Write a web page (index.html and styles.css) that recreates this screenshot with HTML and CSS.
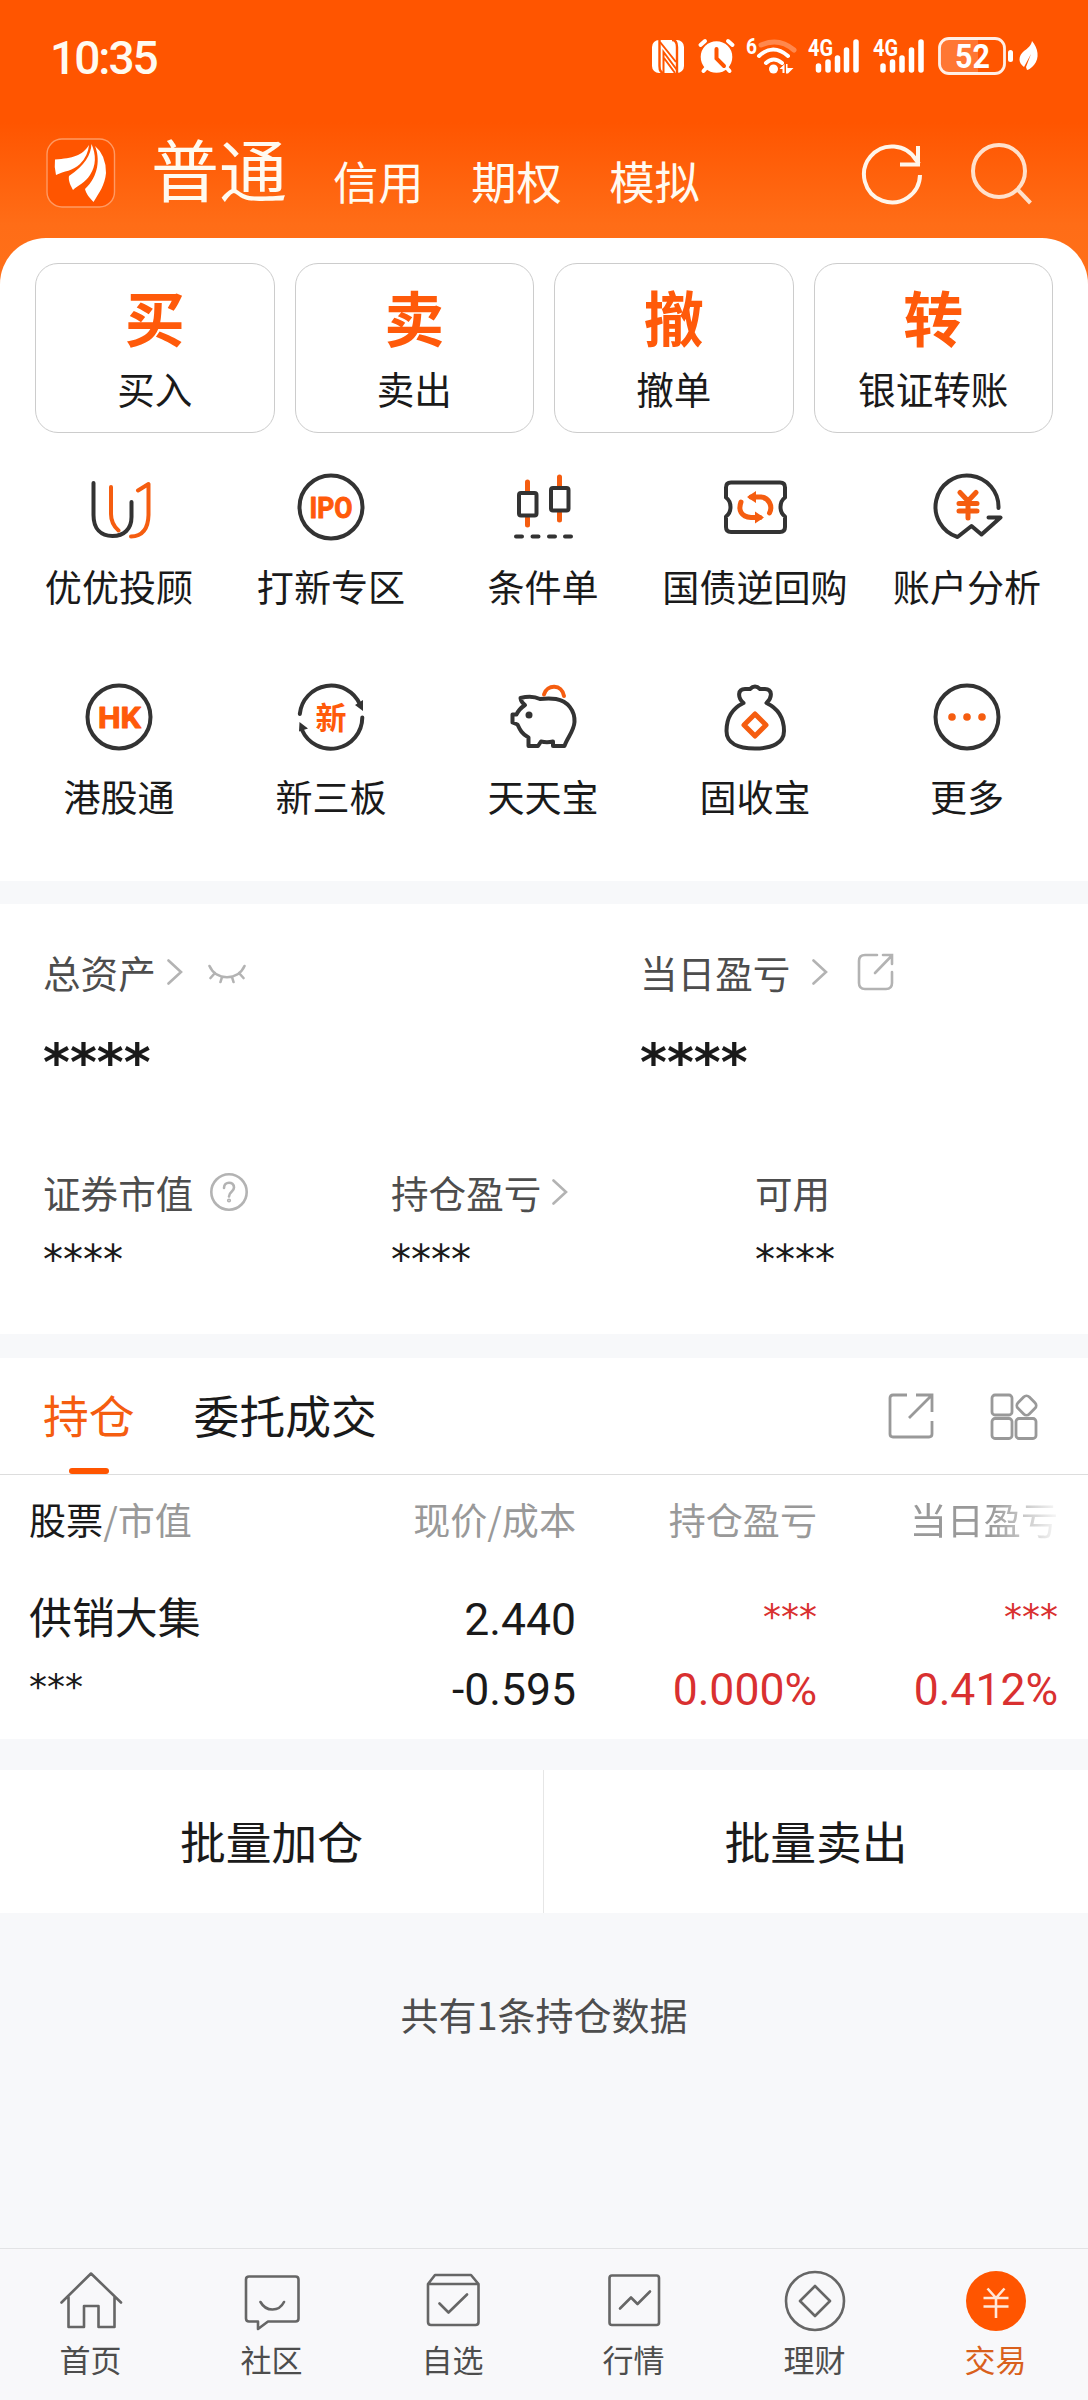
FILE: index.html
```
<!DOCTYPE html>
<html lang="zh-CN">
<head>
    <meta charset="UTF-8">
    <meta name="viewport" content="width=device-width, initial-scale=1.0">
    <title>交易</title>
    <link rel="stylesheet" href="styles.css">
</head>
<body>
    <header class="header">
        <div class="status">
            <span class="time">10:35</span>
            <svg class="status-icons" width="390" height="44" viewBox="650 34 390 44" fill="#fff">
                <!-- NFC -->
                <rect x="652" y="40" width="32" height="33" rx="7"/>
                <g fill="none" stroke="#ff5500" stroke-width="2.4">
                    <path d="M659.5 40V66Q659.5 73 664 73M677 73V47Q677 40 672 40"/>
                    <path d="M660 42L676 62M663.500 73V52L677 70M664 58L675 73" stroke-width="2"/>
                </g>
                <!-- alarm -->
                <circle cx="716.500" cy="57" r="15.800"/>
                <g fill="none" stroke="#fff" stroke-width="4" stroke-linecap="round">
                    <path d="M700.500 45L705 41M732.500 45L728 41M707 67L703.500 71M726 67L729.500 71"/>
                </g>
                <path d="M716.500 49V58.500L724 66" fill="none" stroke="#ff5500" stroke-width="4" stroke-linecap="round"/>
                <!-- wifi -->
                <text class="net" x="746" y="54" font-size="22" textLength="11" lengthAdjust="spacingAndGlyphs">6</text>
                <g fill="none" stroke="#fff" stroke-width="4" stroke-linecap="round">
                    <path d="M761 45Q779 37 794 50" opacity=".3" stroke-width="5"/>
                    <path d="M759 56Q773 43 788 56M766 63Q773.500 56 782 63"/>
                </g>
                <circle cx="773.500" cy="69" r="4.500"/>
                <path d="M779.500 69L784.500 64V73H782.500V69ZM786 64H787.500V68H793.500L788 73.500H786Z"/>
                <!-- signal -->
                <text class="net" x="808" y="55.500" font-size="23" textLength="25" lengthAdjust="spacingAndGlyphs">4G</text>
                <g stroke="#fff" stroke-width="5.500" stroke-linecap="round">
                    <path d="M818.500 66V70M828 62V70M837.500 58V70M846.500 50V70M856 42V70"/>
                    <path d="M883 66V70M892.500 62V70M902 58V70M911.500 50V70M921 42V70"/>
                </g>
                <text class="net" x="873" y="55.500" font-size="23" textLength="25" lengthAdjust="spacingAndGlyphs">4G</text>
                <!-- battery -->
                <path d="M948 39H978V73H948Q940 73 940 65V47Q940 39 948 39Z" opacity=".2"/>
                <rect x="939.500" y="38.500" width="65" height="35" rx="9.500" fill="none" stroke="#fff" stroke-width="2.800" opacity=".9"/>
                <rect x="1008" y="50" width="5" height="12" rx="2.500"/>
                <text class="net" x="955" y="68" font-size="33" textLength="35" lengthAdjust="spacingAndGlyphs">52</text>
                <!-- leaf -->
                <path d="M1032 41C1038 48 1040 58 1034 65C1032 67 1029 70 1027 70L1026 67L1031 54L1024 67C1018 63 1018 56 1024 51C1028 48 1031 46 1032 41Z"/>
            </svg>
        </div>
        <div class="topbar">
            <svg class="logo" width="70" height="70" viewBox="0 0 70 70">
                <rect x="1" y="1" width="67.500" height="68" rx="15" fill="#ff5500" stroke="#ff9a63" stroke-width="1.400"/>
                <g fill="#fff">
                    <path d="M43 7C36 18 27 20 9 21.500Q8 29 10 37C18 33 27 33 34 26Q42 18 43 7Z"/>
                    <path d="M45.500 6C45 17 39 27 23 38C22 43 25 48 27 52C32 47 39 45 44 37Q53 23 45.500 6Z"/>
                    <path d="M49 8C54 20 53 38 39 51C40 56 44 60 47.500 64C53 55 59 47 60 35Q60 17 49 8Z"/>
                </g>
            </svg>
            <nav class="accounts">
                <a class="current">普通</a>
                <a>信用</a>
                <a>期权</a>
                <a>模拟</a>
            </nav>
            <svg class="refresh" width="64" height="64" viewBox="0 0 64 64" fill="none" stroke="#fff5ea" stroke-width="4">
                <path d="M60 33A28 28 0 1 1 56 18L59 22"/>
                <path d="M58 4V22.500H40"/>
            </svg>
            <svg class="search" width="64" height="64" viewBox="0 0 64 64" fill="none" stroke="#ffe0cb" stroke-width="4">
                <circle cx="29" cy="29" r="26"/>
                <path d="M47 47L60.500 61"/>
            </svg>
        </div>
    </header>

    <main>
        <section class="panel trade">
            <div class="actions">
                <div class="action"><b>买</b><span>买入</span></div>
                <div class="action"><b>卖</b><span>卖出</span></div>
                <div class="action"><b>撤</b><span>撤单</span></div>
                <div class="action"><b>转</b><span>银证转账</span></div>
            </div>
            <div class="tools">
                <div class="tool">
                    <svg viewBox="0 0 72 72">
                        <path d="M10.500 12V44C10.500 58 18 65 29.500 65S48.500 58 48.500 46V31"/>
                        <path class="o" d="M28 16V43Q28 53 35.500 59.500M55 19.500L65.500 13V44Q65 65 48 65.500"/>
                    </svg>
                    <span>优优投顾</span>
                </div>
                <div class="tool">
                    <svg viewBox="0 0 72 72">
                        <circle cx="36" cy="36" r="31.500"/>
                        <text x="14.500" y="47" font-size="30" textLength="43" lengthAdjust="spacingAndGlyphs">IPO</text>
                    </svg>
                    <span>打新专区</span>
                </div>
                <div class="tool">
                    <svg viewBox="0 0 72 72">
                        <path class="o wick" d="M20.500 11V20M20.500 47V54M52.500 6V15M52.500 42V49"/>
                        <rect x="12" y="22" width="17.500" height="22.500" rx="2"/>
                        <rect x="44" y="17" width="17.500" height="22.500" rx="2"/>
                        <path d="M9 65.500H15M25.500 65.500H31.500M42 65.500H48M58 65.500H64"/>
                    </svg>
                    <span>条件单</span>
                </div>
                <div class="tool">
                    <svg viewBox="0 0 72 72">
                        <path d="M12 11.500H61Q66 11.500 66 16.500V26.500C60 31 60 41 66 45.500V56Q66 61 61 61H12Q7 61 7 56V45.500C13 41 13 31 7 26.500V16.500Q7 11.500 12 11.500Z"/>
                        <path class="o arrows" d="M32 26H42C50 27 54 35 50.500 42M41 46.500H32C22 46 19 39 22 31"/>
                        <path class="of" d="M28 26L37 20V32ZM45 46.500L36 40.500V52.500Z"/>
                    </svg>
                    <span>国债逆回购</span>
                </div>
                <div class="tool">
                    <svg viewBox="0 0 72 72">
                        <path d="M67.500 37A31.500 31.500 0 1 0 26.500 66L40.500 55L50.500 63.500L69.500 46.500H57.500"/>
                        <path class="o yen" d="M29 21.500L37 30L45 21.500M28 32.500H46M28 40H46M37 31V47"/>
                    </svg>
                    <span>账户分析</span>
                </div>
                <div class="tool">
                    <svg viewBox="0 0 72 72">
                        <circle cx="36" cy="36" r="31.500"/>
                        <text x="15" y="47" font-size="30" textLength="43" lengthAdjust="spacingAndGlyphs">HK</text>
                    </svg>
                    <span>港股通</span>
                </div>
                <div class="tool">
                    <svg viewBox="0 0 72 72">
                        <path d="M4.800 33A31.500 31.500 0 0 1 65 23.500M67.300 36.500A31.500 31.500 0 0 1 7 49"/>
                        <path class="df" d="M60 24L68 19V30ZM4.500 41L13 47.500L4 50.500Z"/>
                        <text class="cjk" x="20.500" y="47.500" font-size="31">新</text>
                    </svg>
                    <span>新三板</span>
                </div>
                <div class="tool">
                    <svg viewBox="0 0 72 72">
                        <path d="M13.500 17Q25 14 33 18Q42 17 49 18C61 20 68 30 67.500 41C67 50 60 57 57.500 65H46V60.500Q40 62 34 60.500L31 65H21.500V56.500C15 53 13 49 10.500 43.500L5.500 41.500V33.500H9.500Q12 28 18 24Q14 21 13.500 17Z"/>
                        <circle class="df" cx="22" cy="34" r="3.500"/>
                        <path class="o" d="M37 13.500C40 3 55 3 57 15"/>
                    </svg>
                    <span>天天宝</span>
                </div>
                <div class="tool">
                    <svg viewBox="0 0 72 72">
                        <path d="M24.500 22C18 16 19 8 26 8H31Q36 3 41 8H46C53 8 54 16 47.500 22C58 27 65 36 65 50C65 62 53 67.500 36 67.500S7.500 62 7.500 50C7.500 36 14 27 24.500 22"/>
                        <path class="o coin" d="M36 33L47 44L36 55L25 44Z"/>
                    </svg>
                    <span>固收宝</span>
                </div>
                <div class="tool">
                    <svg viewBox="0 0 72 72">
                        <circle cx="36" cy="36" r="31.500"/>
                        <g class="of">
                            <circle cx="21" cy="36" r="3.800"/>
                            <circle cx="36" cy="36" r="3.800"/>
                            <circle cx="51" cy="36" r="3.800"/>
                        </g>
                    </svg>
                    <span>更多</span>
                </div>
            </div>
        </section>

        <section class="panel assets">
            <div class="row-main">
                <div class="cell">
                    <div class="label">总资产
                        <svg class="chev" viewBox="0 0 16 26"><path d="M1.500 1.500L14 13L1.500 24.500"/></svg>
                        <svg class="eye" viewBox="0 0 38 20"><path d="M1.500 2C8 17 30 17 36.500 2M7 9L2.500 14M31 9L35.500 14M14 13L12.500 18M24 13L25.500 18"/></svg>
                    </div>
                    <div class="stars big">****</div>
                </div>
                <div class="cell">
                    <div class="label">当日盈亏
                        <svg class="chev far" viewBox="0 0 16 26"><path d="M1.500 1.500L14 13L1.500 24.500"/></svg>
                        <svg class="share" viewBox="0 0 38 38"><path d="M20 2H8Q2 2 2 8V30Q2 36 8 36H29Q35 36 35 30V19M18 20L34.500 3M26 2H35V11"/></svg>
                    </div>
                    <div class="stars big">****</div>
                </div>
            </div>
            <div class="row-sub">
                <div class="cell">
                    <div class="label">证券市值
                        <svg class="help" viewBox="0 0 38 38"><circle cx="19" cy="19" r="17.700"/><path d="M14 15C14 8 24 8 24 14.500C24 19 19 18.500 19 23.500"/><circle cx="19" cy="27.500" r=".8"/></svg>
                    </div>
                    <div class="stars">****</div>
                </div>
                <div class="cell">
                    <div class="label">持仓盈亏
                        <svg class="chev" viewBox="0 0 16 26"><path d="M1.500 1.500L14 13L1.500 24.500"/></svg>
                    </div>
                    <div class="stars">****</div>
                </div>
                <div class="cell">
                    <div class="label">可用</div>
                    <div class="stars">****</div>
                </div>
            </div>
        </section>

        <section class="panel holdings">
            <div class="tabs">
                <a class="tab active">持仓</a>
                <a class="tab">委托成交</a>
                <div class="tab-icons">
                    <svg width="46" height="48" viewBox="0 0 46 48"><path d="M19 2H5Q2 2 2 5V41Q2 44 5 44H41Q44 44 44 41V28M21 25L43 3M28 2H44V19"/></svg>
                    <svg width="48" height="48" viewBox="0 0 48 48">
                        <rect x="2" y="2" width="20" height="20" rx="3"/>
                        <rect x="2" y="25.500" width="20" height="20" rx="3"/>
                        <rect x="26" y="25.500" width="20" height="20" rx="3"/>
                        <rect x="28.500" y="4.500" width="16" height="16" rx="4" transform="rotate(45 36.500 12.500)"/>
                    </svg>
                </div>
            </div>
            <div class="table">
                <div class="tr head">
                    <span><em>股票</em>/市值</span>
                    <span>现价/成本</span>
                    <span>持仓盈亏</span>
                    <span class="fade">当日盈亏</span>
                </div>
                <div class="tr first">
                    <span class="name">供销大集</span>
                    <span class="num">2.440</span>
                    <span class="red mask">***</span>
                    <span class="red mask">***</span>
                </div>
                <div class="tr second">
                    <span class="mask">***</span>
                    <span class="num">-0.595</span>
                    <span class="red num">0.000%</span>
                    <span class="red num">0.412%</span>
                </div>
            </div>
        </section>

        <section class="batch">
            <div>批量加仓</div>
            <div>批量卖出</div>
        </section>
        <p class="total">共有1条持仓数据</p>
    </main>

    <footer class="tabbar">
        <div class="item">
            <svg viewBox="0 0 64 64"><path d="M2.500 33.500L32 4.500L62 33.500M9.500 28V58H25V37H39.500V58H55.500V28"/></svg>
            <span>首页</span>
        </div>
        <div class="item">
            <svg viewBox="0 0 64 64"><path d="M9 7.500H55.500Q58.500 7.500 58.500 10.500V49.500Q58.500 52.500 55.500 52.500H28L18 60V52.500H9Q6 52.500 6 49.500V10.500Q6 7.500 9 7.500ZM20.500 33C26 43 39 43 44 33"/></svg>
            <span>社区</span>
        </div>
        <div class="item">
            <svg viewBox="0 0 64 64"><path d="M7 15L14 6H50L57.500 15V53Q57.500 56 54.500 56H10Q7 56 7 53ZM7 15H57.500M18.500 34.500L27.500 43.500L46 25.500"/></svg>
            <span>自选</span>
        </div>
        <div class="item">
            <svg viewBox="0 0 64 64"><rect x="7.500" y="6.500" width="49.500" height="49.500" rx="2.500"/><path d="M18 39.500L29 28.500L35.500 35L48 22.500"/></svg>
            <span>行情</span>
        </div>
        <div class="item">
            <svg viewBox="0 0 64 64"><circle cx="32" cy="32" r="29"/><path d="M32 17L47 32L32 47L17 32Z"/></svg>
            <span>理财</span>
        </div>
        <div class="item on">
            <svg viewBox="0 0 64 64"><circle cx="32" cy="32" r="30"/><path d="M23.500 19.500L32 29L40.500 19.500M19.500 29H44.500M19.500 37.500H44.500M32 29V49"/></svg>
            <span>交易</span>
        </div>
    </footer>
</body>
</html>
```

FILE: styles.css
```
* { box-sizing: border-box; margin: 0; padding: 0; }
body {
    width: 1088px;
    height: 2400px;
    display: flex;
    flex-direction: column;
    background: #f7f8fa;
    color: #1a1a1a;
    font-family: "Noto Sans CJK SC", sans-serif;
    overflow: hidden;
}
main { flex: 1; }
svg { display: block; flex: none; }

/* header */
.header {
    height: 300px;
    margin-bottom: -62px;
    background: linear-gradient(#ff5500 0, #ff5500 122px, #ff6d17 225px, #ff7119 300px);
    color: #fffaf0;
}
.status {
    height: 114px;
    padding: 34px 48px 0 50px;
    display: flex;
    justify-content: space-between;
}
.time { font-family: "Roboto", sans-serif; font-size: 46px; line-height: 48px; font-weight: 500; letter-spacing: -2px; }
.net { font-family: "Roboto", sans-serif; font-weight: 700; }
.topbar { height: 120px; padding: 0 54px 0 46px; display: flex; }
.logo { margin-top: 24px; }
.accounts { display: flex; align-items: flex-start; padding-left: 35px; }
.accounts a { font-size: 45.300px; line-height: 132px; margin-right: 47.500px; }
.accounts .current { font-size: 68px; line-height: 107px; margin-right: 46px; }
.refresh { margin: 28px 0 0 auto; }
.search { margin: 28px 0 0 46px; }

/* shortcuts */
.panel { background: #fff; }
.trade {
    height: 643px;
    padding-top: 25px;
    border-radius: 46px 46px 0 0;
    position: relative;
}
.actions { display: grid; grid-template-columns: repeat(4, 1fr); gap: 20px; padding: 0 35px; }
.action {
    height: 170px;
    padding-top: 18px;
    border: 1px solid #ccc;
    border-radius: 23px;
    display: flex;
    flex-direction: column;
    align-items: center;
}
.action b { color: #ff5a0a; font-size: 60px; line-height: 68px; }
.action span { font-size: 37.600px; line-height: 48px; margin-top: 14px; }
.tools { display: grid; grid-template-columns: repeat(5, 212px); padding: 38px 13px 0; }
.tool { height: 210px; display: flex; flex-direction: column; align-items: center; }
.tool svg {
    width: 72px;
    height: 72px;
    fill: none;
    stroke: #333;
    stroke-width: 4;
    stroke-linecap: round;
    stroke-linejoin: round;
}
.tool .o { stroke: #f55d10; }
.tool .wick, .tool .arrows, .tool .yen, .tool .coin { stroke-width: 5; }
.tool .of { fill: #f55d10; stroke: none; }
.tool .df { fill: #333; stroke: none; }
.tool text { fill: #ff5a0a; stroke: #ff5a0a; stroke-width: 1; font-family: "Roboto", sans-serif; font-weight: 700; }
.tool .cjk { font-family: "Noto Sans CJK SC", sans-serif; stroke: none; }
.tool span { font-size: 37.100px; line-height: 48px; margin-top: 19px; }

/* assets */
.assets { height: 430px; margin-top: 23px; padding: 42px 43px 0; }
.row-main { display: grid; grid-template-columns: 597px 1fr; height: 220px; }
.row-sub { display: grid; grid-template-columns: 348px 364px 1fr; }
.label { display: flex; align-items: center; font-size: 37.600px; line-height: 50px; height: 52px; color: #4d4d4d; }
.label svg { fill: none; stroke: #b3b3b3; stroke-width: 2.600; stroke-linecap: round; }
.chev { width: 16px; height: 26px; margin-left: 11px; }
.chev.far { margin-left: 22px; }
.eye { width: 38px; height: 20px; margin: 4px 0 0 25px; }
.share { width: 38px; height: 38px; margin-left: 29px; }
.help { width: 38px; height: 38px; margin-left: 17px; }
.stars, .tr .mask { font-family: "DejaVu Sans", sans-serif; }
.stars { font-size: 40px; line-height: 50px; margin-top: 17px; }
.stars.big { font-size: 51.500px; line-height: 60px; font-weight: 700; margin-top: 34px; }

/* holdings */
.holdings { height: 381px; margin-top: 24px; }
.tabs { height: 117px; border-bottom: 1px solid #ddd; padding: 0 50px 0 43px; display: flex; }
.tab { font-size: 45.800px; line-height: 112px; margin-right: 59px; }
.tab.active { color: #f55d10; position: relative; }
.tab.active::after {
    content: "";
    position: absolute;
    left: 26px;
    bottom: 0;
    width: 40px;
    height: 6px;
    border-radius: 3px;
    background: #ff5500;
}
.tab-icons { margin-left: auto; padding-top: 35px; display: flex; gap: 56px; }
.tab-icons svg { fill: none; stroke: #999; stroke-width: 2.800; }
.table { padding: 0 29px; }
.tr { display: grid; grid-template-columns: 306px 241px 241px 241px; font-size: 44px; }
.tr span { text-align: right; white-space: nowrap; }
.tr span:first-child { text-align: left; }
.head { color: #999; font-size: 37.100px; line-height: 50px; padding-top: 19px; }
.head em { font-style: normal; color: #1a1a1a; }
.head .fade { -webkit-mask-image: linear-gradient(90deg, #000 72%, transparent 102%); mask-image: linear-gradient(90deg, #000 72%, transparent 102%); }
.first { line-height: 60px; padding-top: 41px; }
.first .name { font-size: 42.900px; }
.second { line-height: 60px; padding-top: 10px; }
.red { color: #d93030; }
.tr .mask { font-size: 36px; margin: 2px 0 -2px; }
.tr .num { font-family: "Roboto", sans-serif; font-size: 44.500px; margin: 5px 0 -5px; }

/* batch buttons */
.batch { display: grid; grid-template-columns: 1fr 1fr; margin-top: 31px; height: 143px; background: #fff; }
.batch div { font-size: 45.800px; line-height: 140px; text-align: center; }
.batch div:first-child { border-right: 1px solid #e6e6e6; }
.total { margin-top: 76px; text-align: center; font-size: 38px; line-height: 50px; color: #4d4d4d; }

/* bottom bar */
.tabbar {
    height: 152px;
    padding: 20px 2px 0 0;
    border-top: 1px solid #e2e3e5;
    background: #f8f8fa;
    display: grid;
    grid-template-columns: repeat(6, 1fr);
}
.item { display: flex; flex-direction: column; align-items: center; color: #4d4d4d; }
.item svg { width: 64px; height: 64px; fill: none; stroke: #666; stroke-width: 2.600; stroke-linecap: round; stroke-linejoin: round; }
.item span { font-size: 31px; line-height: 40px; margin-top: 6px; }
.on { color: #d9601c; }
.on svg circle { fill: #ff5500; stroke: none; }
.on svg path { stroke: #ffe8d9; stroke-linecap: butt; }
```
